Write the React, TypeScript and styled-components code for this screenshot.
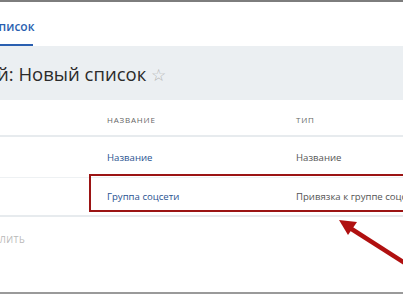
import React from 'react';
import styled, { createGlobalStyle } from 'styled-components';

const Global = createGlobalStyle`
  html, body {
    margin: 0;
    padding: 0;
    background: #fff;
  }
  body {
    font-family: 'Open Sans', 'Liberation Sans', sans-serif;
  }
`;

const Frame = styled.div`
  position: relative;
  width: 403px;
  height: 294px;
  box-sizing: border-box;
  border-top: 2px solid #7d7d7d;
  border-bottom: 2px solid #9a9a9a;
  overflow: hidden;
  display: flex;
  flex-direction: column;
`;

const TabBar = styled.div`
  height: 44px;
  display: flex;
  align-items: flex-end;
  background: #fff;
`;

const Tab = styled.div<{ active?: boolean }>`
  margin-left: -9px;
  padding: 0 0 9px 0;
  width: 42px;
  font-size: 12px;
  font-weight: 600;
  color: ${({ active }) => (active ? '#2a5fb0' : '#777')};
  border-bottom: 2px solid ${({ active }) => (active ? '#2a5fb0' : 'transparent')};
`;

const TitleBand = styled.div`
  height: 54px;
  background: #ebeff2;
  display: flex;
  align-items: center;
`;

const Title = styled.h1`
  margin: 0 0 0 -3px;
  font-size: 18.5px;
  font-weight: 400;
  color: #2b2b2b;
  white-space: nowrap;
`;

const Star = styled.span`
  margin-left: 5px;
  font-size: 17px;
  color: #b5b5b5;
`;

const Table = styled.div`
  display: flex;
  flex-direction: column;
`;

const Row = styled.div<{ height: number; line: number; lineColor?: string }>`
  height: ${({ height }) => height}px;
  display: grid;
  grid-template-columns: 107px 189px 1fr;
  align-items: center;
  border-bottom: ${({ line, lineColor }) => `${line}px solid ${lineColor || '#e7ebee'}`};
  white-space: nowrap;
  overflow: hidden;
`;

const HeadCell = styled.div`
  font-size: 8px;
  letter-spacing: 0.8px;
  text-transform: uppercase;
  color: #666;
  padding-top: 3px;
`;

const LinkCell = styled.div`
  font-size: 9.6px;
  color: #2a5391;
`;

const TextCell = styled.div`
  font-size: 9.6px;
  color: #555;
`;

const Footer = styled.div`
  flex: 1;
  padding-top: 16px;
`;

const DeleteButton = styled.div`
  margin-left: -19px;
  font-size: 9px;
  letter-spacing: 0.4px;
  color: #b8b8b8;
  text-transform: uppercase;
`;

const Highlight = styled.div`
  position: absolute;
  left: 89px;
  top: 172px;
  width: 340px;
  height: 38px;
  box-sizing: border-box;
  border: 2px solid #9b1414;
`;

const Arrow = styled.svg`
  position: absolute;
  left: 330px;
  top: 205px;
`;

export default function App() {
  return (
    <>
      <Global />
      <Frame>
        <TabBar>
          <Tab active>Список</Tab>
        </TabBar>
        <TitleBand>
          <Title>
            й: Новый список<Star>☆</Star>
          </Title>
        </TitleBand>
        <Table>
          <Row height={35} line={2}>
            <div />
            <HeadCell>Название</HeadCell>
            <HeadCell>Тип</HeadCell>
          </Row>
          <Row height={40} line={1} lineColor="#eef1f3">
            <div />
            <LinkCell>Название</LinkCell>
            <TextCell>Название</TextCell>
          </Row>
          <Row height={37} line={2}>
            <div />
            <LinkCell>Группа соцсети</LinkCell>
            <TextCell>Привязка к группе соцсети</TextCell>
          </Row>
        </Table>
        <Footer>
          <DeleteButton>Удалить</DeleteButton>
        </Footer>
        <Highlight />
        <Arrow width="80" height="70" viewBox="0 0 80 70">
          <line x1="20" y1="21" x2="78" y2="58" stroke="#b01010" strokeWidth="4.5" />
          <polygon points="9,13 27,15 18,28" fill="#b01010" />
        </Arrow>
      </Frame>
    </>
  );
}
